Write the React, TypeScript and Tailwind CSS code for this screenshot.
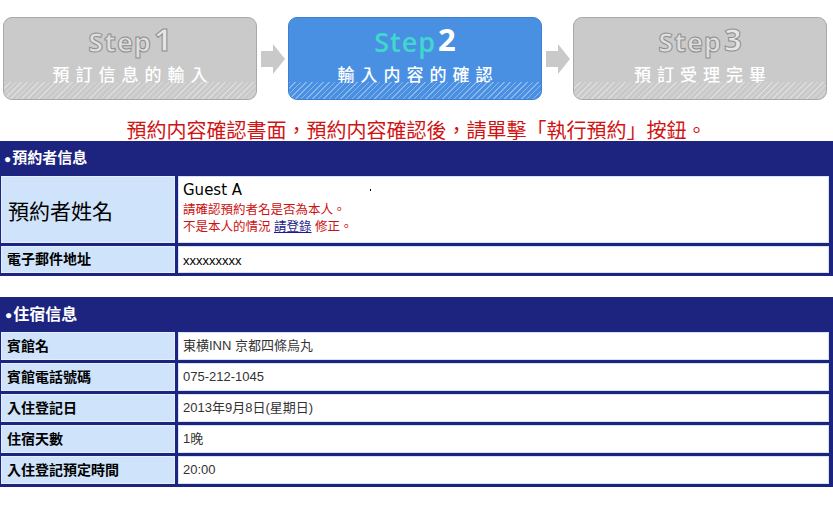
import React from "react";

const cjk = "font-['Liberation_Sans','Noto_Sans_CJK_TC',sans-serif]";

function Arrow() {
  return (
    <div className="flex w-[31px] items-center justify-center">
      <svg width="26" height="32" viewBox="0 0 26 32">
        <polygon points="1,8 13,8 13,1 25,16 13,31 13,24 1,24" fill="#c9c9c9" />
      </svg>
    </div>
  );
}

function StepBox({
  num,
  label,
  active,
}: {
  num: string;
  label: string;
  active?: boolean;
}) {
  return (
    <div
      className={
        "relative flex h-[83px] w-[254px] flex-col items-center overflow-hidden rounded-[9px] border " +
        (active ? "border-[#3f7fd0] bg-[#4a90e2]" : "border-[#a9a9a9] bg-[#cacaca]")
      }
    >
      <div className="absolute inset-x-0 bottom-0 h-[17px] bg-[image:repeating-linear-gradient(135deg,rgba(255,255,255,0.35)_0px,rgba(255,255,255,0.35)_1px,transparent_1px,transparent_4px)]" />
      <div className="relative mt-[7px] flex h-[30px] items-end leading-none font-['Open_Sans',sans-serif]">
        {active ? (
          <>
            <span className="text-[27px] font-semibold tracking-[1px] text-[#40d8cc]">Step</span>
            <span className="ml-[2px] text-[31px] font-bold text-white">{num}</span>
          </>
        ) : (
          <>
            <span className="text-[27px] font-bold tracking-[1px] text-[#dedede] [-webkit-text-stroke:1px_#8e8e8e]">
              Step
            </span>
            <span className="ml-[2px] text-[31px] font-bold text-[#e6e6e6] [-webkit-text-stroke:1px_#8e8e8e]">
              {num}
            </span>
          </>
        )}
      </div>
      <div className={"relative mt-[11px] pl-[6px] text-[17px] font-medium leading-[20px] tracking-[6px] text-white " + cjk}>
        {label}
      </div>
    </div>
  );
}

function Label({ children }: { children: React.ReactNode }) {
  return (
    <div
      className={
        "flex items-center border border-[#e2eefc] bg-[#cfe3fa] pl-[5px] text-[14px] font-bold text-black " + cjk
      }
    >
      {children}
    </div>
  );
}

function Value({ children }: { children: React.ReactNode }) {
  return (
    <div className={"flex items-center border border-[#d5e3f7] bg-white pl-[4px] text-[13px] text-[#333] " + cjk}>
      {children}
    </div>
  );
}

export default function App() {
  const stayRows: [string, string][] = [
    ["賓館名", "東横INN 京都四條烏丸"],
    ["賓館電話號碼", "075-212-1045"],
    ["入住登記日", "2013年9月8日(星期日)"],
    ["住宿天數", "1晚"],
    ["入住登記預定時間", "20:00"],
  ];

  return (
    <div className="h-[520px] w-[833px] overflow-hidden bg-white">
      <div className="flex pl-[3px] pt-[17px]">
        <StepBox num="1" label="預訂信息的輸入" />
        <Arrow />
        <StepBox num="2" label="輸入内容的確認" active />
        <Arrow />
        <StepBox num="3" label="預訂受理完畢" />
      </div>

      <div className={"mt-[21px] h-[20px] text-center text-[20px] leading-[20px] text-[#d01414] " + cjk}>
        預約内容確認書面，預約内容確認後，請單擊「執行預約」按鈕。
      </div>

      <div className="bg-[#1c247f] pb-[3px] pl-[1px] pr-[4px]">
        <div className={"flex h-[35px] items-center pl-[3px] text-[15px] font-bold text-white " + cjk}>
          <span className="mr-[1px] text-[12px]">●</span>預約者信息
        </div>
        <div className="grid grid-cols-[174px_1fr] gap-x-[3px] gap-y-[3px]">
          <div className="flex h-[67px]">
            <div className="flex w-full items-center border border-[#e2eefc] bg-[#cfe3fa] pl-[6px] pt-[2px] text-[21px] text-black font-['Noto_Sans_CJK_TC',sans-serif]">
              預約者姓名
            </div>
          </div>
          <div className="relative flex h-[67px] flex-col border border-[#d5e3f7] bg-white pl-[4px] pt-[4px]">
            <div className="text-[15px] leading-[18px] text-black font-['DejaVu_Sans',sans-serif]">Guest A</div>
            <div className={"mt-[3px] text-[12.5px] leading-[17px] text-[#cc1111] " + cjk}>
              請確認預約者名是否為本人。
            </div>
            <div className={"text-[12.5px] leading-[17px] text-[#cc1111] " + cjk}>
              不是本人的情況 <a className="text-[#1a1a8c] underline">請登錄</a> 修正。
            </div>
            <span className="absolute left-[191px] top-[12px] h-[2px] w-[1px] bg-black" />
          </div>
          <div className="flex h-[27px]">
            <div className={"flex w-full items-center border border-[#e2eefc] bg-[#cfe3fa] pl-[5px] text-[14px] font-bold text-black " + cjk}>
              電子郵件地址
            </div>
          </div>
          <div className="flex h-[27px] items-center border border-[#d5e3f7] bg-white pl-[4px] pt-[3px] text-[13px] text-black font-['Liberation_Sans',sans-serif]">
            xxxxxxxxx
          </div>
        </div>
      </div>

      <div className="mt-[21px] bg-[#1c247f] pb-[3px] pl-[1px] pr-[4px]">
        <div className={"flex h-[35px] items-center pl-[4px] text-[16px] font-bold text-white " + cjk}>
          <span className="mr-[1px] text-[12px]">●</span>住宿信息
        </div>
        <div className="grid grid-cols-[174px_1fr] auto-rows-[28px] gap-x-[3px] gap-y-[3px]">
          {stayRows.map(([k, v]) => (
            <React.Fragment key={k}>
              <Label>{k}</Label>
              <Value>{v}</Value>
            </React.Fragment>
          ))}
        </div>
      </div>
    </div>
  );
}
